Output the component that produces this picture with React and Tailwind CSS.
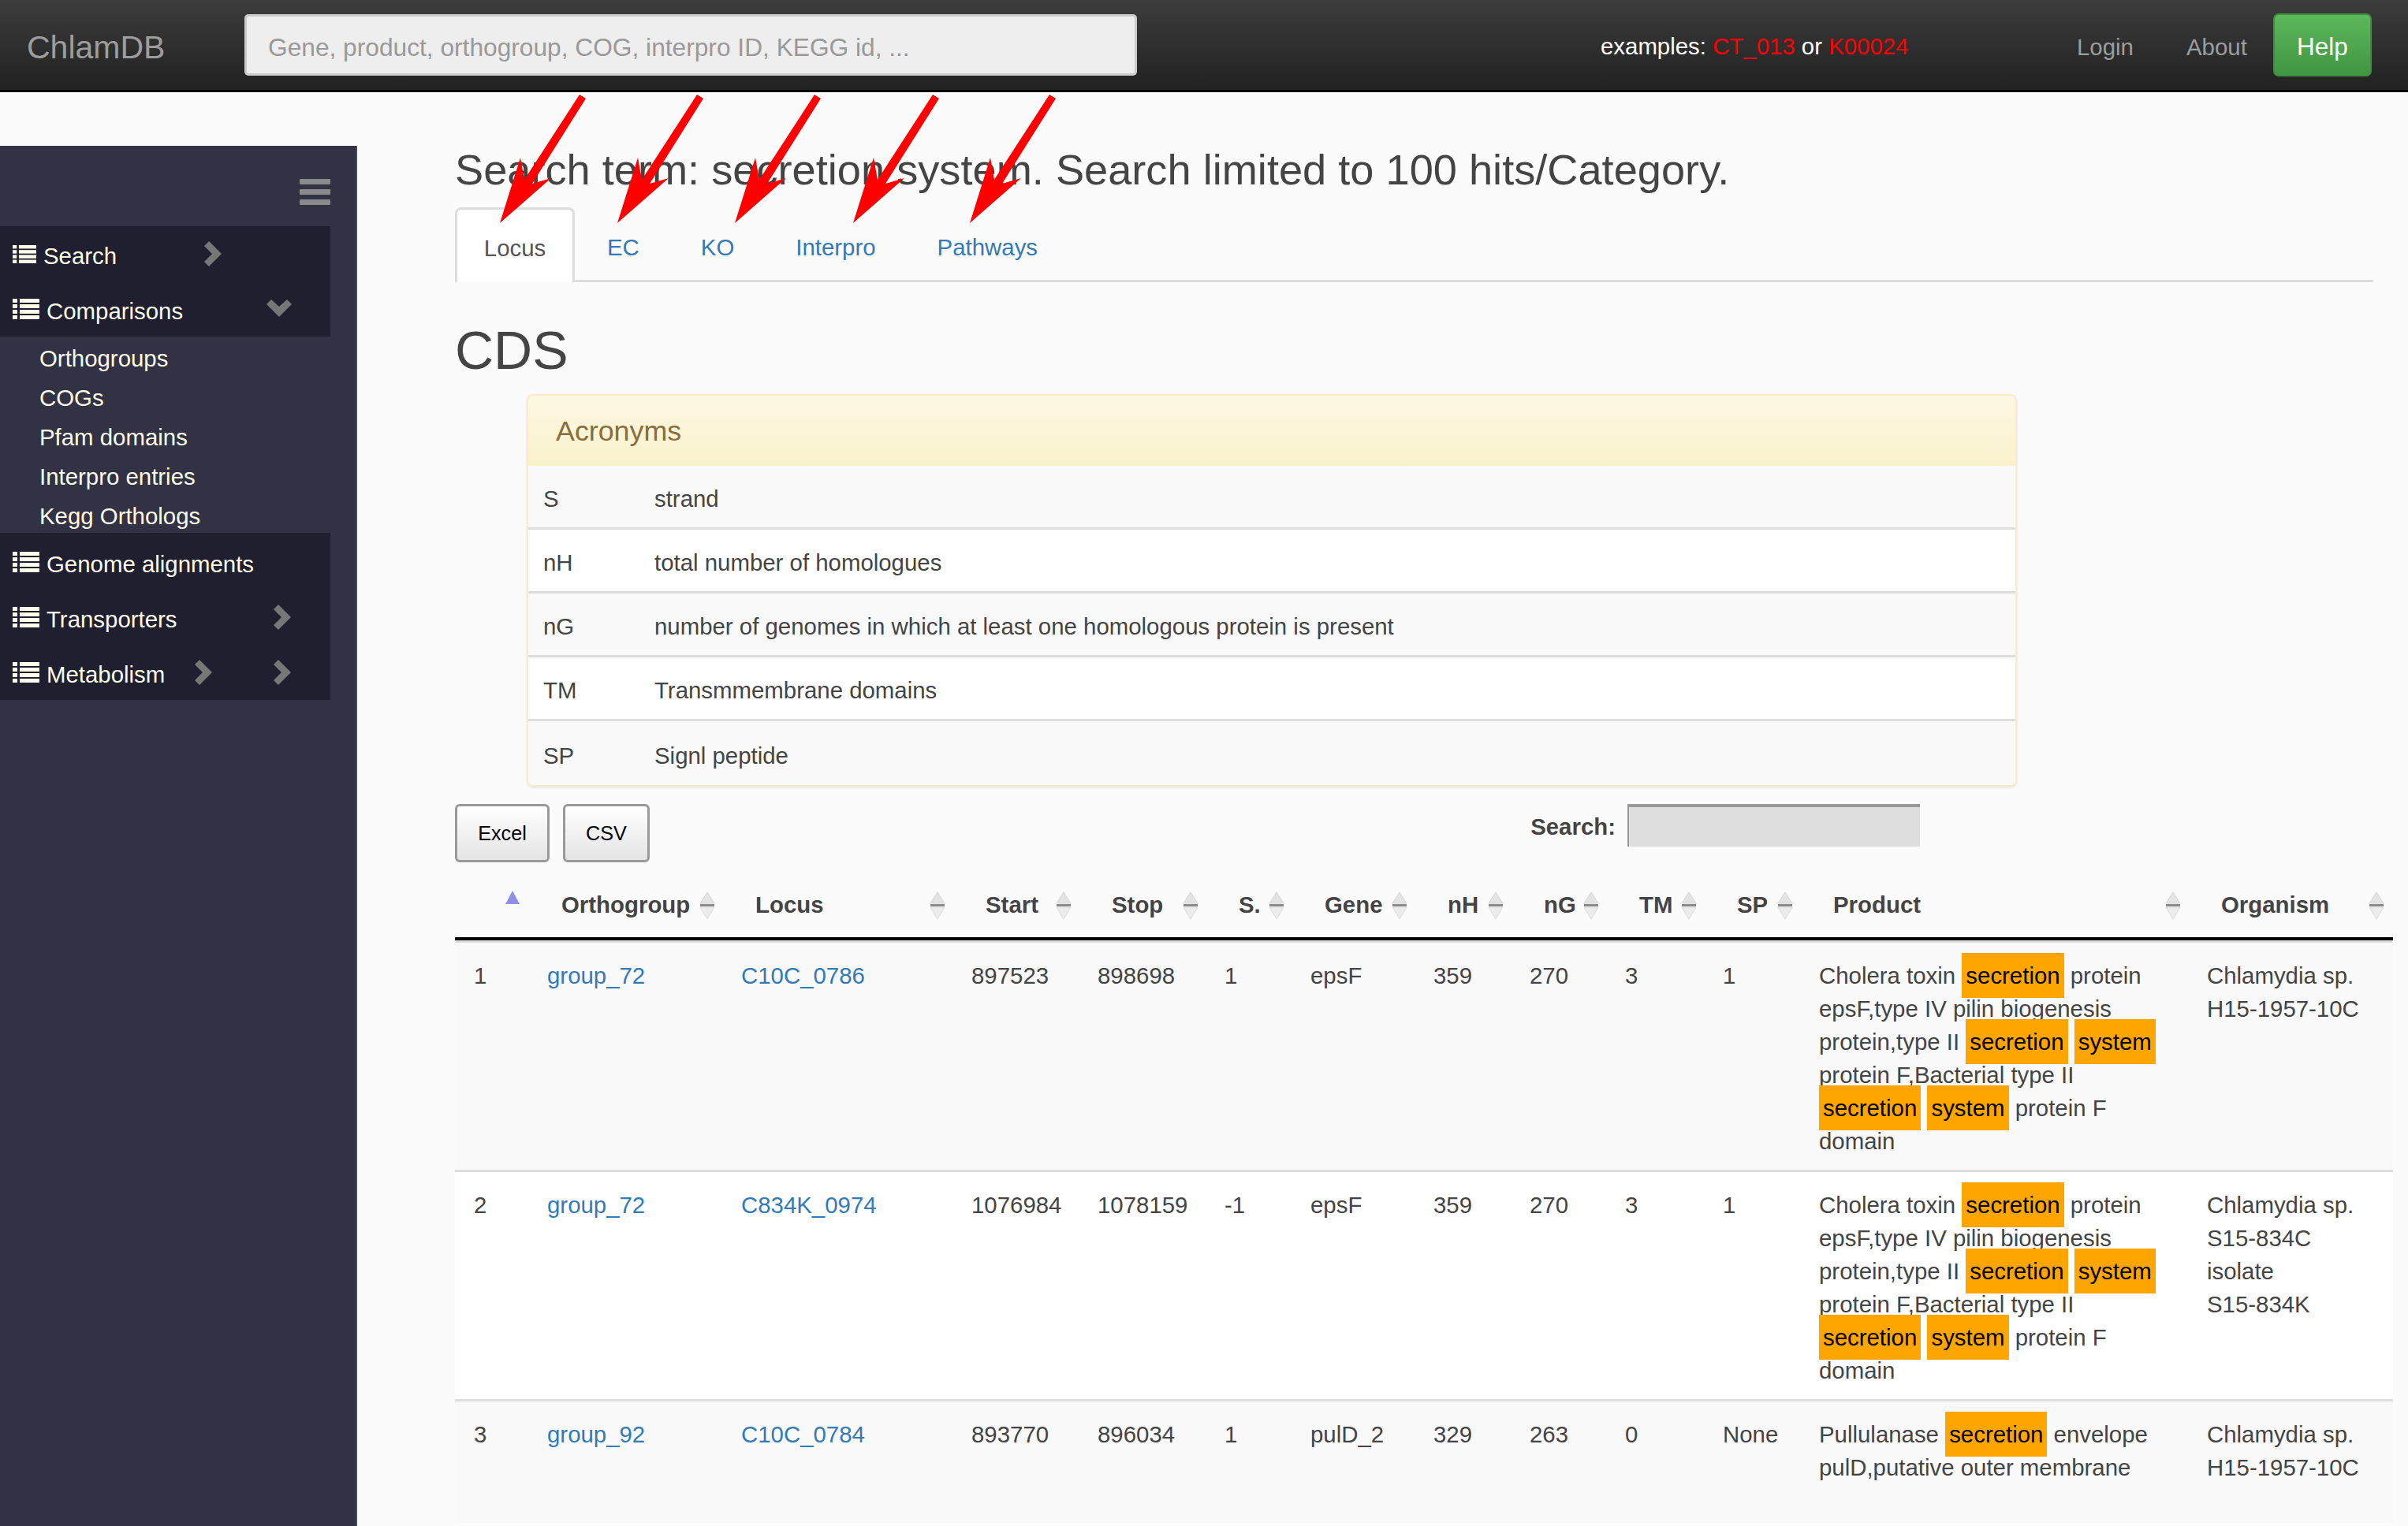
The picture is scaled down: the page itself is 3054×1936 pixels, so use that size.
const Chevron = ({ className = "" }) => (
  <svg viewBox="0 0 22 32" className={`w-[22px] h-[32px] shrink-0 ${className}`}>
    <path d="M6 0 L22 16 L6 32 L0 26 L10 16 L0 6Z" fill="#777" />
  </svg>
);
const ChevronDown = ({ className = "" }) => (
  <svg viewBox="0 0 32 22" className={`w-[32px] h-[22px] shrink-0 ${className}`}>
    <path d="M0 6 L6 0 L16 9 L26 0 L32 6 L16 22Z" fill="#777" />
  </svg>
);
const ListIcon = ({ small }) => (
  <svg viewBox="0 0 34 26" preserveAspectRatio="none" className={`shrink-0 ${small ? "w-[30px] h-[23px]" : "w-[34px] h-[26px]"}`}>
    {[0, 7, 14, 21].map((y) => (
      <g key={y} fill="#fdfdea">
        <rect x="0" y={y} width="6" height="5" />
        <rect x="9" y={y} width="25" height="5" />
      </g>
    ))}
  </svg>
);
const Sort = () => (
  <svg viewBox="0 0 22 36" className="absolute right-[10px] top-[30px] w-[22px] h-[36px]">
    <path d="M11 1 L20 15 L2 15Z" fill="#e4e4e4" stroke="#d4d4d4" strokeWidth="1" />
    <rect x="2" y="16" width="18" height="3" fill="#8a8a8a" />
    <path d="M11 35 L20 20 L2 20Z" fill="#ececec" stroke="#dcdcdc" strokeWidth="1" />
  </svg>
);
const SortAsc = () => (
  <svg viewBox="0 0 20 18" className="absolute right-[12px] top-[29px] w-[20px] h-[18px]">
    <path d="M10 0 L19 17 L1 17Z" fill="#8f8fe8" />
  </svg>
);
const Arrow = ({ x }) => (
  <polygon
    transform={`translate(${x} 283)`}
    points="0,0 26,-83 31,-55 101,-163 109,-158 41,-50 65,-57"
    fill="#ff0000"
  />
);
const Hl = ({ children }) => (
  <span className="bg-[#ffa500] text-black px-[5px] py-[12px]">{children}</span>
);

const SideRow = ({ small, label, textClass = "ml-[9px]", children }) => (
  <div className="flex items-center h-[70px] pl-[16px] text-[#fdfdea]">
    <ListIcon small={small} />
    <span className={`${textClass} pt-[6px]`}>{label}</span>
    {children}
  </div>
);

const acronyms = [
  ["S", "strand"],
  ["nH", "total number of homologues"],
  ["nG", "number of genomes in which at least one homologous protein is present"],
  ["TM", "Transmmembrane domains"],
  ["SP", "Signl peptide"],
];

const columns = [
  ["", 95], ["Orthogroup", 246], ["Locus", 292], ["Start", 160], ["Stop", 161], ["S.", 109], ["Gene", 156],
  ["nH", 122], ["nG", 121], ["TM", 124], ["SP", 122], ["Product", 492], ["Organism", 258],
];

const CholeraProduct = () => (
  <>
    Cholera toxin <Hl>secretion</Hl> protein<br />
    epsF,type IV pilin biogenesis<br />
    protein,type II <Hl>secretion</Hl> <Hl>system</Hl><br />
    protein F,Bacterial type II<br />
    <Hl>secretion</Hl> <Hl>system</Hl> protein F<br />
    domain
  </>
);

const rows = [
  { n: 1, og: "group_72", locus: "C10C_0786", start: "897523", stop: "898698", s: "1", gene: "epsF", nh: "359", ng: "270", tm: "3", sp: "1", product: <CholeraProduct />, org: <>Chlamydia sp.<br />H15-1957-10C</>, bg: "bg-[#f9f9f9]" },
  { n: 2, og: "group_72", locus: "C834K_0974", start: "1076984", stop: "1078159", s: "-1", gene: "epsF", nh: "359", ng: "270", tm: "3", sp: "1", product: <CholeraProduct />, org: <>Chlamydia sp.<br />S15-834C<br />isolate<br />S15-834K</>, bg: "bg-white" },
  { n: 3, og: "group_92", locus: "C10C_0784", start: "893770", stop: "896034", s: "1", gene: "pulD_2", nh: "329", ng: "263", tm: "0", sp: "None", product: <>Pullulanase <Hl>secretion</Hl> envelope<br />pulD,putative outer membrane</>, org: <>Chlamydia sp.<br />H15-1957-10C</>, bg: "bg-[#f9f9f9] h-[157px]" },
];

const td = "border-t-[3px] border-[#ddd] pl-[22px] pt-[21px] pb-[15px] align-top";
const link = "text-[#337ab7]";

export default function App() {
  return (
    <div className="relative w-[3054px] h-[1936px] overflow-hidden bg-[#fbfbfb] text-[#444] text-[29.4px] leading-[42px] font-['Liberation_Sans',Arial,sans-serif]">
      <header className="h-[117px] flex items-center bg-gradient-to-b from-[#3c3c3c] to-[#222] border-b-[3px] border-black">
        <span className="ml-[34px] w-[276px] text-[41px] text-[#9d9d9d] pt-[6px]">ChlamDB</span>
        <div className="w-[1132px] h-[78px] flex items-center bg-[#eee] border-[3px] border-[#ccc] rounded-[5px] pl-[27px] pt-[5px] text-[31.7px] text-[#999]">
          Gene, product, orthogroup, COG, interpro ID, KEGG id, ...
        </div>
        <span className="ml-[588px] w-[604px] text-white pt-[3px]">
          examples: <span className="text-[#f00]">CT_013</span> or <span className="text-[#f00]">K00024</span>
        </span>
        <span className="w-[139px] text-[#9d9d9d] pt-[5px]">Login</span>
        <span className="w-[110px] text-[#9d9d9d] pt-[5px]">About</span>
        <span className="w-[125px] h-[80px] flex items-center justify-center pt-[4px] rounded-[7px] bg-gradient-to-b from-[#5cb85c] to-[#419641] border-[2px] border-[#3e8f3e] text-white text-[31.5px]">Help</span>
      </header>

      <div className="flex h-[1819px]">
        <aside className="mt-[68px] w-[453px] shrink-0 h-[1751px] bg-[#323244] border-r-[2px] border-[#4a4a5a] pt-[42px]">
          <div className="w-[419px]">
            <div className="flex justify-end pr-0 h-[60px]">
              <div className="w-[39px] flex flex-col gap-[6px]">
                <div className="h-[7px] bg-[#8a8a8a] rounded-[1px]" />
                <div className="h-[7px] bg-[#8a8a8a] rounded-[1px]" />
                <div className="h-[7px] bg-[#8a8a8a] rounded-[1px]" />
              </div>
            </div>
            <div className="bg-[#1f1f30]">
              <SideRow small label="Search"><Chevron className="ml-auto mr-[138px]" /></SideRow>
              <SideRow label="Comparisons"><ChevronDown className="ml-auto mr-[49px] -mt-[3px]" /></SideRow>
            </div>
            <div className="h-[249px] pl-[50px] pt-[3px] text-[#fdfdea]">
              {["Orthogroups", "COGs", "Pfam domains", "Interpro entries", "Kegg Orthologs"].map((t) => (
                <div key={t} className="h-[50px] flex items-center">{t}</div>
              ))}
            </div>
            <div className="bg-[#1f1f30] pt-[2px]">
              <SideRow label="Genome alignments" />
              <SideRow label="Transporters"><Chevron className="ml-auto mr-[50px]" /></SideRow>
              <SideRow label="Metabolism">
                <Chevron className="ml-[38px]" />
                <Chevron className="ml-auto mr-[50px]" />
              </SideRow>
            </div>
          </div>
        </aside>

        <main className="flex-1 pl-[124px] pr-[21px] pt-[68px]">
          <h3 className="h-[60px] flex items-center text-[54.2px] whitespace-nowrap">Search term: secretion system. Search limited to 100 hits/Category.</h3>

          <nav className="mt-[18px] h-[95px] w-[2433px] flex border-b-[3px] border-[#ddd]">
            <span className="h-[95px] w-[152px] shrink-0 flex items-center justify-center bg-white border-[3px] border-b-0 border-[#ddd] rounded-t-[8px] text-[#555] pt-[6px]">Locus</span>
            {["EC", "KO", "Interpro", "Pathways"].map((t) => (
              <span key={t} className={`ml-[4px] px-[37px] h-[92px] flex items-center pt-[10px] ${link}`}>{t}</span>
            ))}
          </nav>

          <h2 className="mt-[46px] h-[80px] flex items-center text-[68px]">CDS</h2>

          <section className="mt-[16px] ml-[91px] w-[1890px] border-[2px] border-[#faebcc] rounded-[8px] overflow-hidden shadow-sm">
            <div className="h-[89px] flex items-center pl-[35px] bg-gradient-to-b from-[#fcf8e3] to-[#faf2cc] text-[#8a6d3b] text-[35.8px]">Acronyms</div>
            {acronyms.map(([a, d], i) => (
              <div key={a} className={`flex items-center h-[81px] pl-[19px] pt-[6px] ${i % 2 ? "bg-white" : "bg-[#f9f9f9]"} ${i < 4 ? "border-b-[3px] border-[#ddd]" : ""}`}>
                <span className="w-[141px]">{a}</span>
                <span>{d}</span>
              </div>
            ))}
          </section>

          <div className="mt-[22px] h-[74px] flex items-start">
            <span className="w-[120px] h-[74px] flex items-center justify-center border-[3px] border-[#999] rounded-[6px] bg-gradient-to-b from-white to-[#e4e4e4] text-black text-[25.2px]">Excel</span>
            <span className="ml-[17px] w-[110px] h-[74px] flex items-center justify-center border-[3px] border-[#999] rounded-[6px] bg-gradient-to-b from-white to-[#e4e4e4] text-black text-[25.2px]">CSV</span>
            <span className="ml-auto font-bold h-[54px] flex items-center mt-[2px]">Search:</span>
            <span className="ml-[15px] mr-[600px] w-[371px] h-[54px] bg-[#ddd] border-t-[4px] border-l-[2px] border-[#999]" />
          </div>

          <table className="mt-[7px] w-[2458px] table-fixed border-separate border-spacing-0">
            <colgroup>
              {columns.map(([c, w], i) => <col key={i} style={{ width: w }} />)}
            </colgroup>
            <thead>
              <tr>
                {columns.map(([c], i) => (
                  <th key={i} className="relative h-[92px] pl-[40px] pt-[5px] text-left font-bold border-b-[4px] border-black whitespace-nowrap">
                    {c}
                    {i === 0 ? <SortAsc /> : <Sort />}
                  </th>
                ))}
              </tr>
            </thead>
            <tbody>
              {rows.map((r) => (
                <tr key={r.n} className={r.bg}>
                  <td className={`${td} !pl-[24px]`}>{r.n}</td>
                  <td className={td}><span className={link}>{r.og}</span></td>
                  <td className={td}><span className={link}>{r.locus}</span></td>
                  <td className={td}>{r.start}</td>
                  <td className={td}>{r.stop}</td>
                  <td className={td}>{r.s}</td>
                  <td className={td}>{r.gene}</td>
                  <td className={td}>{r.nh}</td>
                  <td className={td}>{r.ng}</td>
                  <td className={td}>{r.tm}</td>
                  <td className={td}>{r.sp}</td>
                  <td className={`${td} whitespace-nowrap`}>{r.product}</td>
                  <td className={`${td} whitespace-nowrap`}>{r.org}</td>
                </tr>
              ))}
            </tbody>
          </table>
        </main>
      </div>

      <svg className="absolute left-0 top-0 w-[3054px] h-[400px] pointer-events-none" viewBox="0 0 3054 400">
        <Arrow x={634} />
        <Arrow x={783} />
        <Arrow x={932} />
        <Arrow x={1082} />
        <Arrow x={1230} />
      </svg>
    </div>
  );
}
